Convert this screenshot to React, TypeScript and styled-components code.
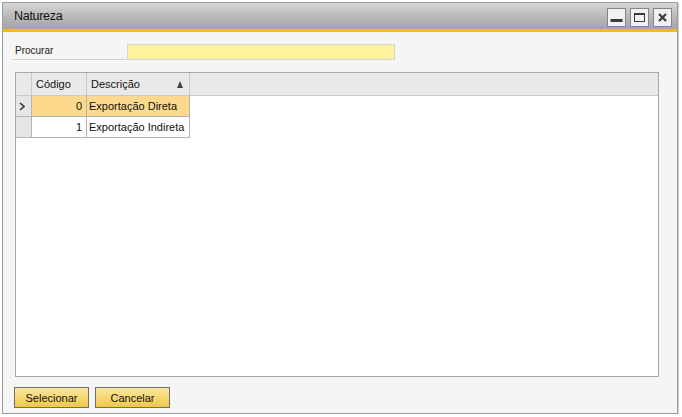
import React from "react";
import styled, { createGlobalStyle } from "styled-components";

const Global = createGlobalStyle`
  html, body { margin: 0; padding: 0; background: #ffffff; }
  body { font-family: "Liberation Sans", Arial, sans-serif; }
`;

const Window = styled.div`
  margin: 2px 0 0 2px;
  width: 674px;
  height: 410px;
  border: 1px solid #9c9c9c;
  box-shadow: 1px 1px 0 #cfcfcf;
  background: #f5f5f5;
  display: flex;
  flex-direction: column;
`;

const TitleBar = styled.div`
  height: 26px;
  display: flex;
  align-items: center;
  justify-content: space-between;
  padding: 0 5px 0 11px;
  background: linear-gradient(#d6d6d6 0%, #bdbdbd 45%, #a3a3a3 100%);
`;

const Title = styled.span`
  font-size: 12.5px;
  color: #111;
  letter-spacing: -0.3px;
`;

const Controls = styled.div`
  display: flex;
  gap: 4px;
  margin-top: 2px;
`;

const CtrlButton = styled.div`
  width: 17px;
  height: 17px;
  border: 1px solid #858585;
  background: #f1f1f1;
  display: flex;
  align-items: center;
  justify-content: center;
`;

const Accent = styled.div`
  height: 3px;
  background: #fbb914;
`;

const Content = styled.div`
  flex: 1;
  display: flex;
  flex-direction: column;
  padding: 12px 18px 5px 11px;
`;

const SearchRow = styled.div`
  display: flex;
  height: 16px;
  margin-left: -1px;
`;

const SearchLabel = styled.div`
  width: 112px;
  border-bottom: 1px solid #d3d3d3;
  font-size: 10px;
  color: #222;
  padding-left: 2px;
  line-height: 13px;
`;

const SearchInput = styled.div`
  width: 266px;
  height: 14px;
  background: #fff29e;
  border: 1px solid #d6d6d6;
`;

const Grid = styled.div`
  margin-top: 12px;
  margin-left: 1px;
  flex: 1;
  border: 1px solid #a8a8a8;
  background: #ffffff;
  display: flex;
  flex-direction: column;
`;

const HeaderRow = styled.div`
  display: flex;
  height: 22px;
  background: #e9e9e9;
  border-bottom: 1px solid #c9c9c9;
`;

const HeaderCell = styled.div<{ $w?: number }>`
  ${(p) => (p.$w ? `width: ${p.$w}px;` : "flex: 1;")}
  flex-shrink: 0;
  border-right: 1px solid #c9c9c9;
  display: flex;
  align-items: center;
  justify-content: space-between;
  padding: 0 4px 0 4px;
  box-sizing: border-box;
  font-size: 11px;
  color: #111;
  &:last-child { border-right: none; }
`;

const SortArrow = styled.span`
  width: 0;
  height: 0;
  border-left: 3.5px solid transparent;
  border-right: 3.5px solid transparent;
  border-bottom: 7px solid #444;
  margin-right: 2px;
`;

const DataRow = styled.div`
  display: flex;
  height: 21px;
`;

const Cell = styled.div<{ $w: number; $sel?: boolean; $right?: boolean; $gutter?: boolean }>`
  width: ${(p) => p.$w}px;
  box-sizing: border-box;
  border-right: 1px solid #b4b4b4;
  border-bottom: 1px solid #b4b4b4;
  background: ${(p) => (p.$gutter ? "#e6e6e6" : p.$sel ? "#fcd98c" : "#ffffff")};
  display: flex;
  align-items: center;
  justify-content: ${(p) => (p.$right ? "flex-end" : "flex-start")};
  padding: 0 ${(p) => (p.$right ? "4px" : "2px")} 0 2px;
  font-size: 11px;
  color: #111;
  white-space: nowrap;
`;

const Buttons = styled.div`
  display: flex;
  gap: 6px;
  margin-top: 10px;
`;

const Button = styled.div`
  width: 73px;
  height: 19px;
  border: 1px solid #6e6e6e;
  background: linear-gradient(#fbe7a0 0%, #f6d873 50%, #f0c848 100%);
  display: flex;
  align-items: center;
  justify-content: center;
  font-size: 11px;
  color: #111;
`;

const rows = [
  { code: "0", desc: "Exportação Direta", sel: true },
  { code: "1", desc: "Exportação Indireta", sel: false },
];

export default function App() {
  return (
    <>
      <Global />
      <Window>
        <TitleBar>
          <Title>Natureza</Title>
          <Controls>
            <CtrlButton>
              <svg width="13" height="13" viewBox="0 0 13 13">
                <rect x="0.5" y="8" width="12" height="3" fill="#3a3a3a" />
              </svg>
            </CtrlButton>
            <CtrlButton>
              <svg width="13" height="13" viewBox="0 0 13 13">
                <rect x="1.5" y="2.5" width="10" height="8" fill="none" stroke="#3a3a3a" strokeWidth="1" />
                <rect x="1" y="2" width="11" height="2" fill="#3a3a3a" />
              </svg>
            </CtrlButton>
            <CtrlButton>
              <svg width="13" height="13" viewBox="0 0 13 13">
                <path d="M3 3 L10 10 M10 3 L3 10" stroke="#3a3a3a" strokeWidth="2.2" />
              </svg>
            </CtrlButton>
          </Controls>
        </TitleBar>
        <Accent />
        <Content>
          <SearchRow>
            <SearchLabel>Procurar</SearchLabel>
            <SearchInput />
          </SearchRow>
          <Grid>
            <HeaderRow>
              <HeaderCell $w={16} />
              <HeaderCell $w={55}>Código</HeaderCell>
              <HeaderCell $w={103}>
                Descrição
                <SortArrow />
              </HeaderCell>
              <HeaderCell />
            </HeaderRow>
            {rows.map((r) => (
              <DataRow key={r.code}>
                <Cell $w={16} $gutter>
                  {r.sel && (
                    <svg width="8" height="9" viewBox="0 0 8 9">
                      <path d="M2 1 L6 4.5 L2 8" fill="none" stroke="#333" strokeWidth="1.6" />
                    </svg>
                  )}
                </Cell>
                <Cell $w={55} $sel={r.sel} $right>
                  {r.code}
                </Cell>
                <Cell $w={103} $sel={r.sel}>
                  {r.desc}
                </Cell>
              </DataRow>
            ))}
          </Grid>
          <Buttons>
            <Button>Selecionar</Button>
            <Button>Cancelar</Button>
          </Buttons>
        </Content>
      </Window>
    </>
  );
}
